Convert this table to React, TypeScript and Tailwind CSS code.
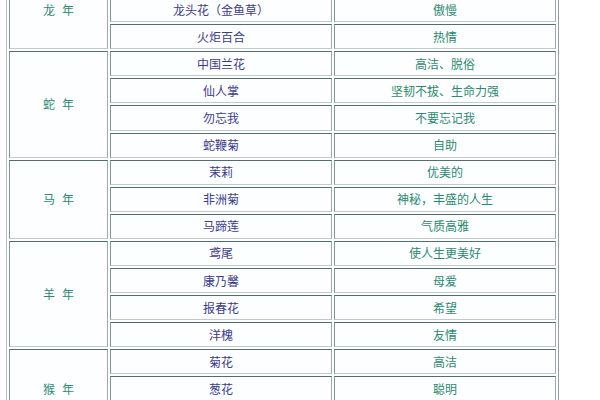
import React from 'react';

interface Group {
  year: string;
  rows: [string, string][];
}

// first dragon row and last monkey row sit outside the 600x400 window
const groups: Group[] = [
  {
    year: '龙',
    rows: [
      ['', ''],
      ['龙头花（金鱼草）', '傲慢'],
      ['火炬百合', '热情'],
    ],
  },
  {
    year: '蛇',
    rows: [
      ['中国兰花', '高洁、脱俗'],
      ['仙人掌', '坚韧不拔、生命力强'],
      ['勿忘我', '不要忘记我'],
      ['蛇鞭菊', '自助'],
    ],
  },
  {
    year: '马',
    rows: [
      ['茉莉', '优美的'],
      ['非洲菊', '神秘，丰盛的人生'],
      ['马蹄莲', '气质高雅'],
    ],
  },
  {
    year: '羊',
    rows: [
      ['鸢尾', '使人生更美好'],
      ['康乃馨', '母爱'],
      ['报春花', '希望'],
      ['洋槐', '友情'],
    ],
  },
  {
    year: '猴',
    rows: [
      ['菊花', '高洁'],
      ['葱花', '聪明'],
      ['', ''],
    ],
  },
];

const spanClass: Record<number, string> = {
  3: 'row-span-3',
  4: 'row-span-4',
};

const cell =
  'flex items-center justify-center border border-t-[#4f6e6e] border-l-[#7f9494] border-r-[#9fa9a9] border-b-[#c3c9c9] bg-[#fdfeff]';

export default function App() {
  return (
    <div
      className="w-[600px] h-[400px] overflow-hidden bg-white"
      style={{ fontFamily: '"Noto Sans CJK SC", "Noto Sans", sans-serif' }}
    >
      <div className="ml-[6px] mt-[-33px] w-fit border border-t-[#c9cfcf] border-l-[#b4bebe] border-r-[#8fa0a0] border-b-[#8fa0a0] p-[2px]">
        <div className="grid grid-cols-[99px_222px_222px] auto-rows-[25.1px] gap-[2px] text-[12px] leading-none">
          {groups.map((g) => (
            <React.Fragment key={g.year}>
              <div className={`${cell} ${spanClass[g.rows.length]} gap-[7px] text-[#2c8a74]`}>
                <span>{g.year}</span>
                <span>年</span>
              </div>
              {g.rows.map(([flower, meaning], i) => (
                <React.Fragment key={g.year + i}>
                  <div className={`${cell} col-start-2 text-[#3b3c8e]`}>{flower}</div>
                  <div className={`${cell} col-start-3 text-[#2b8a6e]`}>{meaning}</div>
                </React.Fragment>
              ))}
            </React.Fragment>
          ))}
        </div>
      </div>
    </div>
  );
}
